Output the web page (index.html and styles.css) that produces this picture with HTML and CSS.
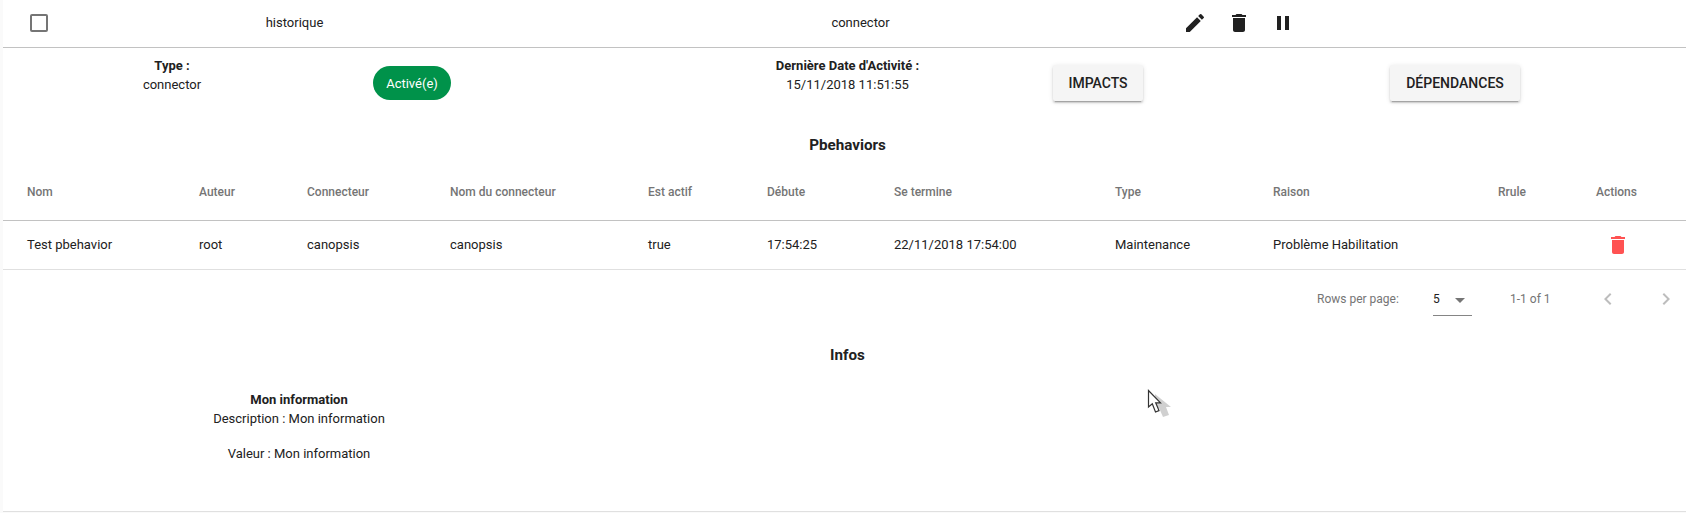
FILE: index.html
```html
<!DOCTYPE html>
<html lang="fr">
<head>
<meta charset="utf-8">
<title>Entités</title>
<link rel="stylesheet" href="styles.css">
</head>
<body>
<main class="panel">
  <div class="entity-row">
    <span class="checkbox"></span>
    <span class="entity-name">historique</span>
    <span class="entity-type">connector</span>
    <span class="entity-actions">
      <svg class="icon" viewBox="0 0 24 24"><path d="M3 17.25V21h3.75L17.81 9.94l-3.75-3.75L3 17.25zM20.71 7.04a1 1 0 0 0 0-1.41l-2.34-2.34a1 1 0 0 0-1.41 0l-1.83 1.83 3.75 3.75 1.83-1.83z"/></svg>
      <svg class="icon" viewBox="0 0 24 24"><path d="M6 19c0 1.100.9 2 2 2h8c1.100 0 2-.9 2-2V7H6v12zM19 4h-3.500l-1-1h-5l-1 1H5v2h14V4z"/></svg>
      <svg class="icon" viewBox="0 0 24 24"><path d="M6 19h4V5H6v14zm8-14v14h4V5h-4z"/></svg>
    </span>
  </div>

  <section class="summary">
    <div class="fact"><b>Type :</b><span>connector</span></div>
    <div class="cell cell-state"><span class="chip">Activé(e)</span></div>
    <div class="fact"><b>Dernière Date d'Activité :</b><span>15/11/2018 11:51:55</span></div>
    <div class="cell cell-impacts"><button class="btn btn-impacts">IMPACTS</button></div>
    <div class="cell cell-deps"><button class="btn btn-deps">DÉPENDANCES</button></div>
  </section>

  <h3 class="title">Pbehaviors</h3>
  <div class="table">
    <div class="tr head">
      <span>Nom</span><span>Auteur</span><span>Connecteur</span><span>Nom du connecteur</span><span>Est actif</span><span>Débute</span><span>Se termine</span><span>Type</span><span>Raison</span><span>Rrule</span><span>Actions</span>
    </div>
    <div class="tr data">
      <span>Test pbehavior</span><span>root</span><span>canopsis</span><span>canopsis</span><span>true</span><span>17:54:25</span><span>22/11/2018 17:54:00</span><span>Maintenance</span><span>Problème Habilitation</span><span></span>
      <span class="row-action"><svg class="icon danger" viewBox="0 0 24 24"><path d="M6 19c0 1.100.9 2 2 2h8c1.100 0 2-.9 2-2V7H6v12zM19 4h-3.500l-1-1h-5l-1 1H5v2h14V4z"/></svg></span>
    </div>
  </div>
  <div class="pagination">
    <span class="rows-label">Rows per page:</span>
    <span class="select">5<svg class="icon caret" viewBox="0 0 24 24"><path d="M7 10l5 5 5-5z"/></svg></span>
    <span class="range">1-1 of 1</span>
    <svg class="icon chevron prev" viewBox="0 0 24 24"><path d="M15.410 7.410L14 6l-6 6 6 6 1.410-1.410L10.830 12z"/></svg>
    <svg class="icon chevron next" viewBox="0 0 24 24"><path d="M10 6L8.590 7.410 13.170 12l-4.580 4.590L10 18l6-6z"/></svg>
  </div>

  <h3 class="title title-infos">Infos</h3>
  <section class="infos">
    <b>Mon information</b>
    <span>Description : Mon information</span>
    <span class="value">Valeur : Mon information</span>
  </section>
</main>
<svg class="cursor" viewBox="0 0 26 32">
  <path class="cursor-shadow" d="M8 5v17l4-3 4 9 6-2-3-8h5z"/>
  <path class="cursor-arrow" d="M1.500 1.500v16.500l3.800-3.300 3.200 8.300 3.500-1.400-3.300-7.800h4.800z"/>
</svg>
</body>
</html>
```
FILE: styles.css
```css
* { box-sizing: border-box; }
body {
  margin: 0;
  padding-left: 3px;
  height: 513px;
  overflow: hidden;
  background: #fafafa;
  font: 13px/19px Roboto, sans-serif;
  color: #212121;
}
.panel { height: 512px; background: #fff; border-bottom: 1px solid #e0e0e0; }
.icon { display: block; width: 24px; height: 24px; fill: #212121; }

.entity-row {
  display: grid;
  grid-template-columns: 27px 18px 493px 639px 1fr;
  align-items: center;
  height: 48px;
  padding-bottom: 3px;
  border-bottom: 1px solid #c2c2c2;
}
.checkbox {
  grid-column: 2;
  width: 18px;
  height: 18px;
  margin-top: 2px;
  border: 2px solid #757575;
  border-radius: 2px;
}
.entity-name,
.entity-type { text-align: center; }
.entity-actions { display: flex; gap: 20px; padding: 2px 0 0 3px; }

.summary {
  display: grid;
  grid-template-columns: 338px 337px 339px 162px 1fr;
  height: 97px;
}
.fact { display: flex; flex-direction: column; align-items: center; padding-top: 8px; }
.cell { display: flex; align-items: flex-start; }
.cell-state { padding: 18px 0 0 32px; }
.cell-impacts { padding-top: 17px; justify-content: center; }
.cell-deps { padding: 17px 0 0 211px; }
.chip {
  width: 78px;
  height: 34px;
  border-radius: 17px;
  background: #00924a;
  color: #fff;
  line-height: 35px;
  text-align: center;
}
.btn {
  height: 36px;
  padding: 0;
  border: 0;
  border-radius: 2px;
  background: #f5f5f5;
  box-shadow: 0 3px 1px -2px rgba(0,0,0,.2), 0 2px 2px rgba(0,0,0,.14), 0 1px 5px rgba(0,0,0,.12);
  color: #212121;
  font: 500 14px Roboto, sans-serif;
}
.btn-impacts { width: 90px; }
.btn-deps { width: 130px; }

.title { margin: -9px 0 0; height: 19px; padding-left: 6px; font-size: 15.2px; line-height: 19px; text-align: center; }

.tr {
  display: grid;
  grid-template-columns: 172px 108px 143px 198px 119px 127px 221px 158px 225px 98px 1fr;
  align-items: center;
  padding-left: 24px;
  white-space: nowrap;
}
.head { height: 66px; padding-top: 9px; border-bottom: 1px solid #c2c2c2; color: #757575; font-size: 12px; font-weight: 500; }
.data { height: 49px; padding-bottom: 1px; border-bottom: 1px solid #e0e0e0; }
.row-action { padding: 1px 0 0 10px; }
.danger { fill: #ff5252; }

.pagination { display: flex; align-items: center; height: 60px; padding: 0 0 2px 1314px; color: #757575; font-size: 12px; white-space: nowrap; }
.rows-label { width: 116px; }
.select { display: flex; align-items: center; width: 39px; height: 32px; margin-top: 2px; border-bottom: 1px solid #858585; color: #212121; }
.caret { margin-left: 8px; fill: #757575; flex: none; }
.range { width: 86px; margin-left: 38px; }
.chevron { flex: none; fill: #bdbdbd; }
.next { margin-left: 34px; }

.title-infos { margin-top: 16px; }
.infos { display: flex; flex-direction: column; align-items: center; width: 592px; margin-top: 25px; }
.value { margin-top: 16px; }
.cursor { position: absolute; left: 1147px; top: 389px; width: 26px; height: 32px; }
.cursor-shadow { fill: #000; opacity: .18; filter: blur(.6px); }
.cursor-arrow { fill: #fff; stroke: #333; stroke-width: 1.200; }
```
